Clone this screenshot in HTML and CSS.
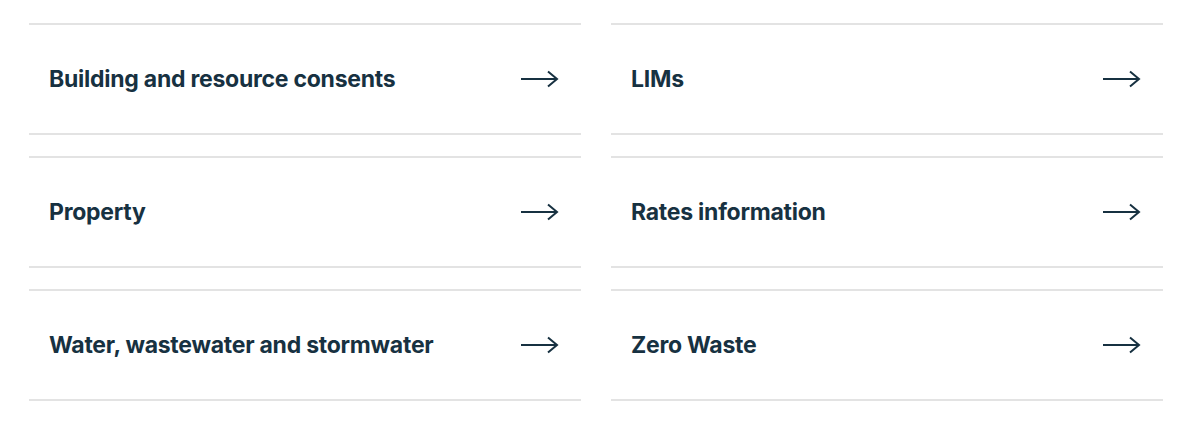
FILE: index.html
```html
<!DOCTYPE html>
<html lang="en">
<head>
  <meta charset="UTF-8">
  <meta name="viewport" content="width=device-width, initial-scale=1.0">
  <title>Services</title>
  <link rel="stylesheet" href="styles.css">
</head>
<body>

  <div class="link-grid">
    <a class="link-card" href="#">
      <span class="link-title">Building and resource consents</span>
      <svg class="arrow" width="38" height="18" viewBox="0 0 38 18"><path d="M0 9H36M27 1.5L36 9L27 16.5"/></svg>
    </a>
    <a class="link-card" href="#">
      <span class="link-title">LIMs</span>
      <svg class="arrow" width="38" height="18" viewBox="0 0 38 18"><path d="M0 9H36M27 1.5L36 9L27 16.5"/></svg>
    </a>
    <a class="link-card" href="#">
      <span class="link-title">Property</span>
      <svg class="arrow" width="38" height="18" viewBox="0 0 38 18"><path d="M0 9H36M27 1.5L36 9L27 16.5"/></svg>
    </a>
    <a class="link-card" href="#">
      <span class="link-title">Rates information</span>
      <svg class="arrow" width="38" height="18" viewBox="0 0 38 18"><path d="M0 9H36M27 1.5L36 9L27 16.5"/></svg>
    </a>
    <a class="link-card" href="#">
      <span class="link-title">Water, wastewater and stormwater</span>
      <svg class="arrow" width="38" height="18" viewBox="0 0 38 18"><path d="M0 9H36M27 1.5L36 9L27 16.5"/></svg>
    </a>
    <a class="link-card" href="#">
      <span class="link-title">Zero Waste</span>
      <svg class="arrow" width="38" height="18" viewBox="0 0 38 18"><path d="M0 9H36M27 1.5L36 9L27 16.5"/></svg>
    </a>
  </div>

</body>
</html>
```

FILE: styles.css
```css
body {
  font-family: Inter, 'Noto Sans', Arial, sans-serif;
  background: #fff;
  color: #173141;
  margin: 0;
  padding: 23px 24px 0 29px;
}

.link-grid {
  display: grid;
  grid-template-columns: 552px 552px;
  column-gap: 30px;
  row-gap: 21px;
}

.link-card {
  display: flex;
  align-items: center;
  justify-content: space-between;
  height: 108px;
  padding: 0 22px 0 20px;
  border-top: 2px solid #e3e3e3;
  border-bottom: 2px solid #e3e3e3;
  color: #173141;
  text-decoration: none;
}

.link-title {
  font-size: 23px;
  font-weight: 700;
  letter-spacing: -0.25px;
}

.arrow {
  fill: none;
  stroke: #173141;
  stroke-width: 2;
}
```
